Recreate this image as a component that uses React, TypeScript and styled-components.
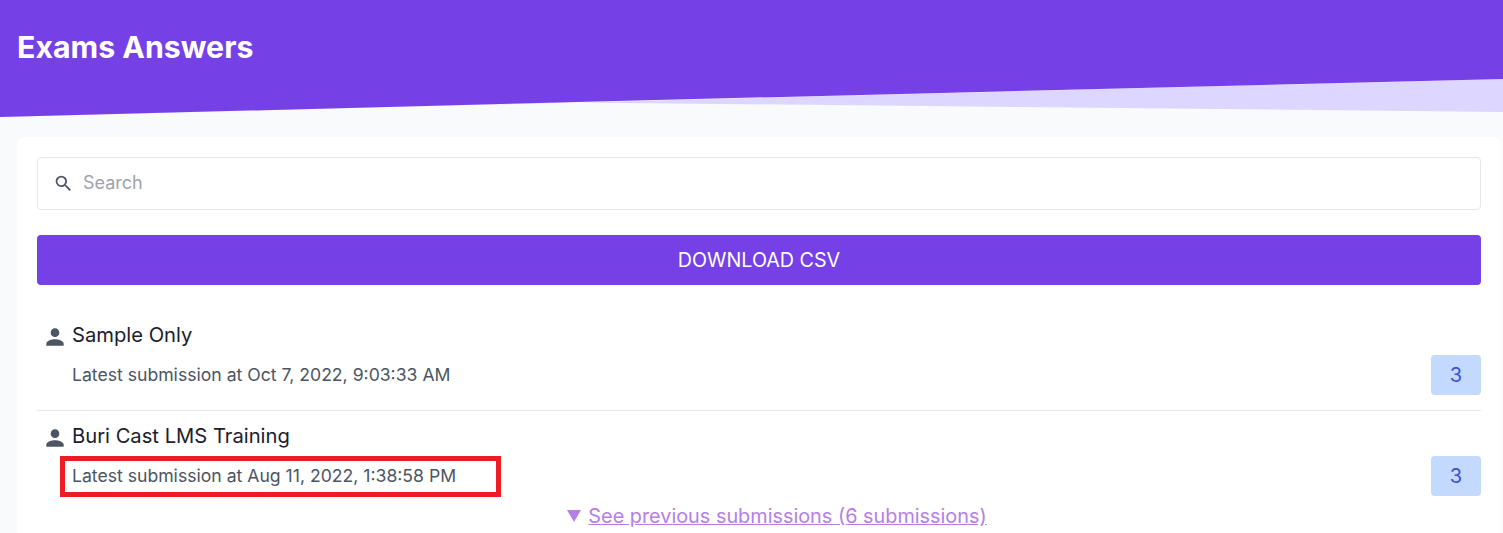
import styled, { createGlobalStyle } from 'styled-components'
import { MdPerson, MdSearch } from 'react-icons/md'

const purple = '#7540e6'

const GlobalStyle = createGlobalStyle`
  html, body {
    margin: 0;
    height: 100%;
    overflow: hidden;
    background: #f9fafb;
    font-family: Inter, "Liberation Sans", sans-serif;
  }
`

const Header = styled.header`
  position: relative;
  height: 117px;
  padding: 29px 17px 0;
  box-sizing: border-box;
`

const HeaderShape = styled.svg`
  position: absolute;
  inset: 0;
  width: 100%;
  height: 117px;
`

const Title = styled.h1`
  position: relative;
  margin: 0;
  font-size: 30.3px;
  line-height: 36px;
  font-weight: 700;
  color: #fff;
`

const Card = styled.main`
  margin: 20px 2px 0 17px;
  padding: 20px;
  background: #fff;
  border-radius: 8px;
`

const SearchBox = styled.div`
  display: flex;
  align-items: center;
  gap: 7px;
  height: 53px;
  padding-left: 15px;
  box-sizing: border-box;
  border: 1px solid #e5e7eb;
  border-radius: 4px;
  color: #4b5563;
`

const SearchInput = styled.input`
  flex: 1;
  height: 30px;
  padding: 0 2px 2px;
  border: 0;
  outline: 0;
  font: inherit;
  font-size: 18px;
  color: #111827;

  &::placeholder {
    color: #9ca3af;
    opacity: 1;
  }
`

const DownloadButton = styled.button`
  display: block;
  width: 100%;
  height: 50px;
  margin-top: 25px;
  border: 0;
  border-radius: 4px;
  background: ${purple};
  color: #fff;
  font: inherit;
  font-size: 19.7px;
`

const List = styled.ul`
  margin: 25px 0 0;
  padding: 0;
  list-style: none;
`

const Item = styled.li<{ $last?: boolean }>`
  padding: ${(p) => (p.$last ? '11px 0 0' : '11px 0 15px')};
  border-bottom: ${(p) => (p.$last ? '0' : '1px solid #e5e7eb')};
`

const NameRow = styled.div`
  display: flex;
  align-items: center;
  gap: 4px;
  padding-left: 5px;
  height: 28px;
  color: #4b5563;

  svg {
    margin-top: 4px;
  }
`

const Name = styled.span`
  margin-top: -2px;
  font-size: 20.2px;
  color: #1a202c;
`

const SubRow = styled.div`
  display: flex;
  align-items: center;
  justify-content: space-between;
  height: 40px;
  margin-top: 6px;
  padding-left: 35px;
`

const Submission = styled.span`
  position: relative;
  margin-top: -1px;
  font-size: 17.63px;
  color: #4b5563;
`

const Highlight = styled.span`
  position: absolute;
  left: -12px;
  top: -9px;
  width: 441px;
  height: 41px;
  box-sizing: border-box;
  border: 5px solid #ed1c24;
`

const Badge = styled.span`
  display: flex;
  align-items: center;
  justify-content: center;
  width: 50px;
  height: 40px;
  border-radius: 4px;
  background: #c3dafe;
  color: #3b50d0;
  font-size: 20px;
`

const Previous = styled.div`
  display: flex;
  align-items: center;
  justify-content: center;
  gap: 7px;
  margin-top: 8px;
  padding-left: 36px;
  color: #b67ee6;
  font-size: 19.85px;
`

const Triangle = styled.span`
  width: 0;
  height: 0;
  border-left: 7px solid transparent;
  border-right: 7px solid transparent;
  border-top: 12px solid #b67ee6;
`

const PreviousLink = styled.a`
  color: inherit;
  text-decoration: underline;
`

function App() {
  return (
    <>
      <GlobalStyle />
      <Header>
        <HeaderShape viewBox="0 0 1503 117" preserveAspectRatio="none">
          <polygon points="0,96.5 1503,112 1503,79 0,117" fill="#ddd6fe" />
          <polygon points="0,0 1503,0 1503,79 1000,91.4 500,104 0,117" fill={purple} />
        </HeaderShape>
        <Title>Exams Answers</Title>
      </Header>
      <Card>
        <SearchBox>
          <MdSearch size={21} />
          <SearchInput placeholder="Search" />
        </SearchBox>
        <DownloadButton>DOWNLOAD CSV</DownloadButton>
        <List>
          <Item>
            <NameRow>
              <MdPerson size={26} />
              <Name>Sample Only</Name>
            </NameRow>
            <SubRow>
              <Submission>Latest submission at Oct 7, 2022, 9:03:33 AM</Submission>
              <Badge>3</Badge>
            </SubRow>
          </Item>
          <Item $last>
            <NameRow>
              <MdPerson size={26} />
              <Name>Buri Cast LMS Training</Name>
            </NameRow>
            <SubRow>
              <Submission>
                Latest submission at Aug 11, 2022, 1:38:58 PM
                <Highlight />
              </Submission>
              <Badge>3</Badge>
            </SubRow>
            <Previous>
              <Triangle />
              <PreviousLink href="#">See previous submissions (6 submissions)</PreviousLink>
            </Previous>
          </Item>
        </List>
      </Card>
    </>
  )
}

export default App
